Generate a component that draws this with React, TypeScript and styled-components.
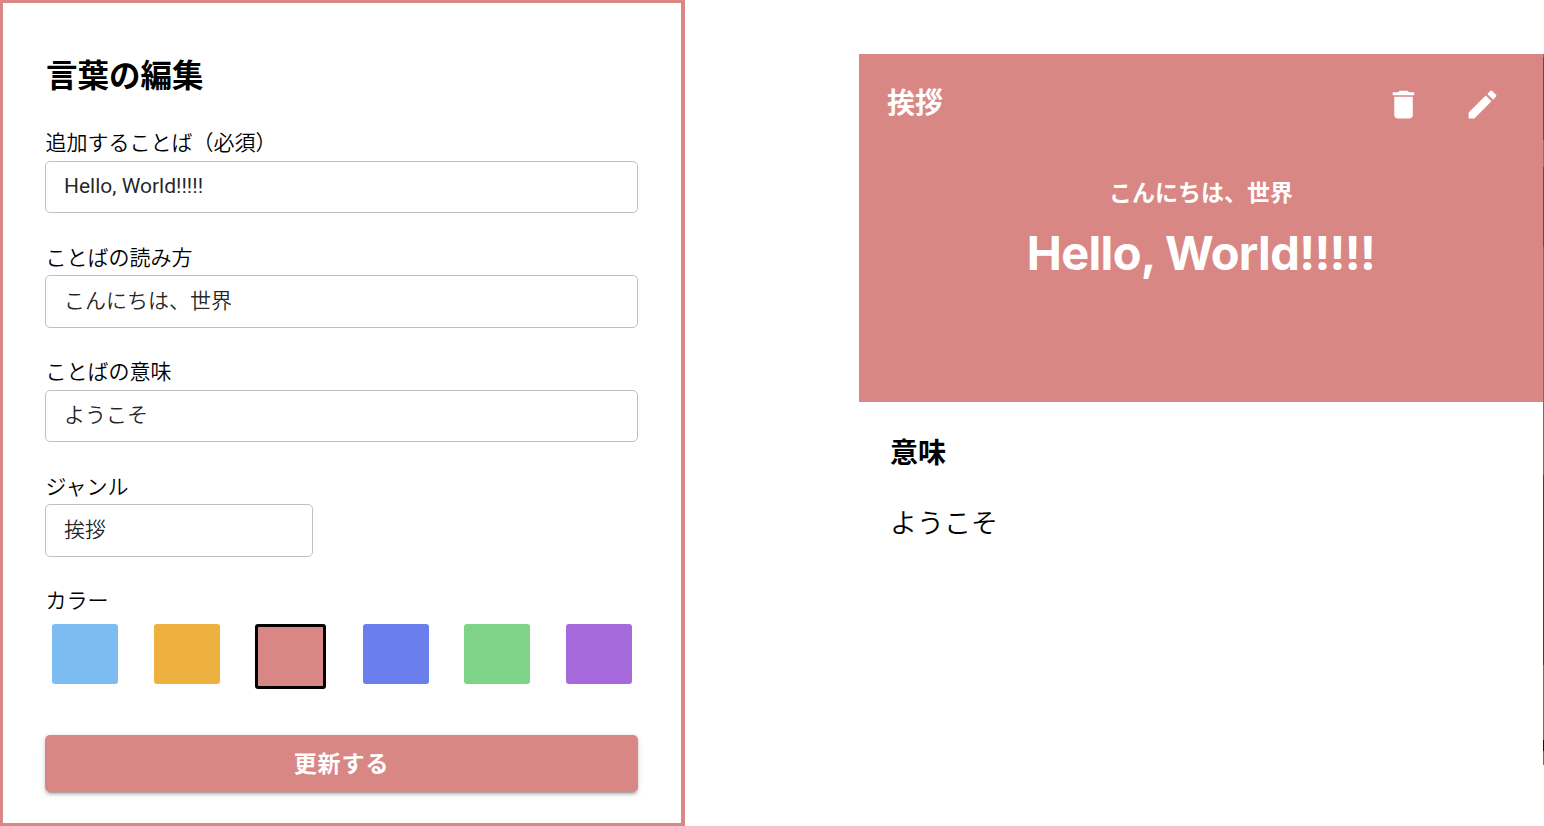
import React from "react";
import styled, { createGlobalStyle } from "styled-components";
import { MdDelete, MdEdit } from "react-icons/md";

const ACCENT = "#d98784";

const GlobalStyle = createGlobalStyle`
  *, *::before, *::after { box-sizing: border-box; }
  body {
    margin: 0;
    background: #fff;
    color: #000;
    font-family: Roboto, "Noto Sans CJK JP", sans-serif;
  }
`;

const Page = styled.div`
  display: flex;
  justify-content: space-between;
  align-items: flex-start;
  width: 1544px;
  height: 826px;
  overflow: hidden;
`;

const EditPanel = styled.form`
  width: 685px;
  height: 826px;
  padding: 49px 42px 0;
  border: 3px solid ${ACCENT};
  border-right-width: 4px;
`;

const Title = styled.h1`
  margin: 0 0 27px;
  padding-left: 1px;
  height: 47px;
  line-height: 50px;
  font-size: 31.5px;
  font-weight: 700;
`;

const Field = styled.div`
  height: 114.6px;
`;

const Label = styled.label`
  display: block;
  height: 34.5px;
  padding-left: 0.5px;
  line-height: 34px;
  font-size: 21px;
  font-weight: 350;
`;

const TextInput = styled.input<{ $short?: boolean; $latin?: boolean; $lift: number }>`
  display: block;
  width: ${(p) => (p.$short ? "268px" : "593px")};
  height: 52.5px;
  padding: 0 18px ${(p) => p.$lift}px;
  border: 1px solid #c0c0c0;
  border-radius: 5px;
  background: #fff;
  color: rgba(0, 0, 0, 0.87);
  font: inherit;
  font-size: 21px;
  font-weight: ${(p) => (p.$latin ? 400 : 350)};
  outline: none;
`;

const Swatches = styled.div`
  display: flex;
  gap: 35.5px;
  align-items: flex-start;
  height: 116px;
  padding: 5px 0 0 7px;
`;

const Swatch = styled.button<{ $color: string; $selected?: boolean }>`
  flex: none;
  width: ${(p) => (p.$selected ? 71 : 66)}px;
  height: ${(p) => (p.$selected ? 65 : 60)}px;
  margin-right: ${(p) => (p.$selected ? 1.4 : 0)}px;
  padding: 0;
  border: ${(p) => (p.$selected ? "3px solid #000" : "0")};
  border-radius: 3px;
  background: ${(p) => p.$color};
`;

const SubmitButton = styled.button`
  display: block;
  width: 593px;
  height: 57px;
  padding: 0 0 3px;
  border: 0;
  border-radius: 5px;
  background: ${ACCENT};
  color: #fff;
  font: inherit;
  font-size: 23px;
  font-weight: 700;
  letter-spacing: 0.9px;
  box-shadow: 0 4px 1px -3px rgba(0, 0, 0, 0.2), 0 2.6px 2.6px rgba(0, 0, 0, 0.14),
    0 1.3px 6px rgba(0, 0, 0, 0.12);
`;

const CardFrame = styled.div`
  display: flex;
  width: 685px;
  height: 711px;
  margin-top: 54px;
`;

const WordCard = styled.article`
  flex: 1;
`;

const CardEdge = styled.div`
  width: 1px;
  background: linear-gradient(
    #777 3px, #6b4a2a 3px 86px, #777 86px 113px, #6b4a2a 113px 193px,
    #6e6e6e 193px 421px, #363b66 421px 611px, #6e6e6e 611px 686px,
    #111 686px 697px, #6e6e6e 697px
  );
`;

const Hero = styled.header`
  height: 348px;
  background: ${ACCENT};
  color: #fff;
`;

const HeroBar = styled.div`
  display: flex;
  align-items: center;
  justify-content: space-between;
  height: 100px;
  padding: 0 42.5px 0 28px;
`;

const Genre = styled.span`
  font-size: 28px;
  line-height: 40px;
  font-weight: 700;
`;

const Actions = styled.div`
  display: flex;
  gap: 42px;
`;

const IconButton = styled.button`
  display: flex;
  padding: 0;
  border: 0;
  background: none;
  color: #fff;
`;

const Reading = styled.p`
  margin: 23px 0 0;
  height: 34px;
  line-height: 34px;
  text-align: center;
  font-size: 23px;
  font-weight: 700;
`;

const Word = styled.h2`
  margin: 12px 0 0;
  height: 60px;
  line-height: 60px;
  text-align: center;
  font-family: Inter, "Noto Sans CJK JP", sans-serif;
  font-size: 47px;
  font-weight: 700;
  letter-spacing: -0.65px;
`;

const Meaning = styled.section`
  padding: 32px 31px;
`;

const MeaningTitle = styled.h3`
  margin: 0 0 29px;
  height: 40px;
  line-height: 40px;
  font-size: 28px;
  font-weight: 700;
`;

const MeaningText = styled.p`
  margin: 0;
  height: 42px;
  line-height: 42px;
  font-size: 27px;
  font-weight: 350;
`;

const colors = ["#7cbcf0", "#eeb03f", ACCENT, "#6a7eec", "#7ed389", "#a66adc"];

const fields = [
  { id: "word", label: "追加することば（必須）", value: "Hello, World!!!!!", latin: true, lift: 2 },
  { id: "reading", label: "ことばの読み方", value: "こんにちは、世界", lift: 4 },
  { id: "meaning", label: "ことばの意味", value: "ようこそ", lift: 6 },
  { id: "genre", label: "ジャンル", value: "挨拶", short: true, lift: 6 },
];

export default function App() {
  return (
    <>
      <GlobalStyle />
      <Page lang="ja">
        <EditPanel>
          <Title>言葉の編集</Title>
          {fields.map((f) => (
            <Field key={f.id}>
              <Label htmlFor={f.id}>{f.label}</Label>
              <TextInput
                id={f.id}
                defaultValue={f.value}
                $short={f.short}
                $latin={f.latin}
                $lift={f.lift}
              />
            </Field>
          ))}
          <Label as="div">カラー</Label>
          <Swatches>
            {colors.map((c) => (
              <Swatch key={c} type="button" $color={c} $selected={c === ACCENT} />
            ))}
          </Swatches>
          <SubmitButton type="button">更新する</SubmitButton>
        </EditPanel>
        <CardFrame>
          <WordCard>
            <Hero>
              <HeroBar>
                <Genre>挨拶</Genre>
                <Actions>
                  <IconButton type="button" aria-label="削除">
                    <MdDelete size={37} />
                  </IconButton>
                  <IconButton type="button" aria-label="編集">
                    <MdEdit size={37} />
                  </IconButton>
                </Actions>
              </HeroBar>
              <Reading>こんにちは、世界</Reading>
              <Word>Hello, World!!!!!</Word>
            </Hero>
            <Meaning>
              <MeaningTitle>意味</MeaningTitle>
              <MeaningText>ようこそ</MeaningText>
            </Meaning>
          </WordCard>
          <CardEdge />
        </CardFrame>
      </Page>
    </>
  );
}
